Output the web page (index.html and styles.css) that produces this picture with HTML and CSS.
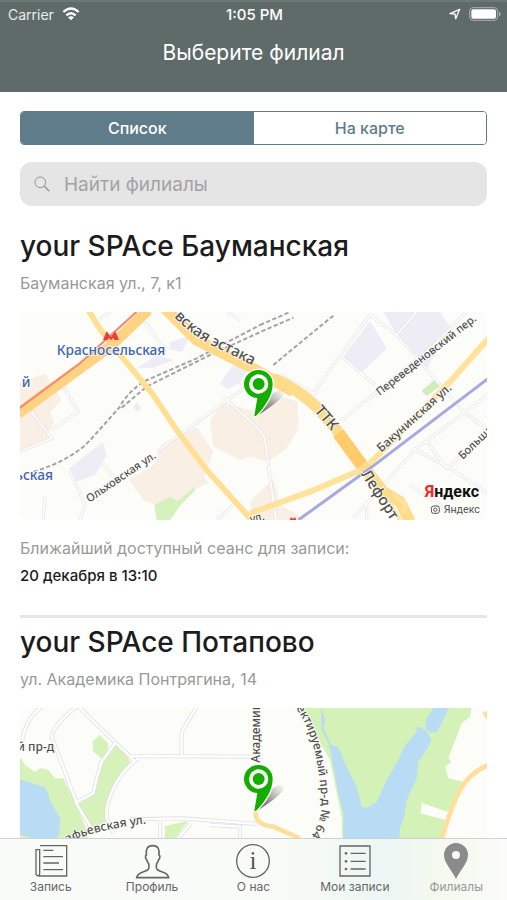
FILE: index.html
```html
<!DOCTYPE html>
<html lang="ru">
<head>
<meta charset="utf-8">
<meta name="viewport" content="width=device-width, initial-scale=1">
<title>Выберите филиал</title>
<link rel="stylesheet" href="styles.css">
</head>
<body>
<svg class="defs" aria-hidden="true">
  <defs>
    <linearGradient id="shade" x1="0" y1="1" x2="1" y2="0">
      <stop offset="0" stop-color="#333" stop-opacity=".9"/>
      <stop offset=".5" stop-color="#555" stop-opacity=".55"/>
      <stop offset="1" stop-color="#888" stop-opacity="0"/>
    </linearGradient>
    <symbol id="pin" viewBox="0 0 160 160" overflow="visible">
      <path d="M46 146 L82 92 Q106 62 130 66 Q138 76 116 96 Q92 118 46 146Z" fill="url(#shade)"/>
      <path d="M55 2a46 46 0 0 1 46 46c0 34-22 70-54 101l-9-4 7-52A46 46 0 0 1 55 2Z" fill="#fff"/>
      <path d="M55 6a42 42 0 0 1 42 42c0 32-20 66-51 97l-4-2 9-53A42 42 0 0 1 55 6Z" fill="#15ad00"/>
      <circle cx="55" cy="48" r="29" fill="#fff"/>
      <circle cx="55" cy="48" r="18" fill="#15ad00"/>
    </symbol>
  </defs>
</svg>
<div class="app">
  <header class="header">
    <div class="status">
      <div class="status-left">
        <span>Carrier</span>
        <svg class="wifi" viewBox="0 0 54 42" aria-hidden="true"><g fill="none" stroke="#fff" stroke-width="7"><path d="M4 15Q27-6 50 15"/><path d="M13 25Q27 12 41 25"/></g><path d="M18 31q9-7 18 0l-9 9Z" fill="#fff"/></svg>
      </div>
      <span class="clock">1:05 PM</span>
      <div class="status-right">
        <svg class="arrow" viewBox="0 0 36 36" aria-hidden="true"><path d="M3 17 32 4 20 32 18 18Z" fill="none" stroke="#fff" stroke-width="4" stroke-linejoin="round"/></svg>
        <svg class="battery" viewBox="0 0 96 42" aria-hidden="true"><rect x="2" y="2" width="84" height="38" rx="10" fill="none" stroke="#a9b1af" stroke-width="3"/><rect x="7" y="7" width="74" height="28" rx="6" fill="#fff"/><path d="M90 14q5 2 5 7t-5 7Z" fill="#a9b1af"/></svg>
      </div>
    </div>
    <h1 class="title">Выберите филиал</h1>
  </header>

  <main class="content">
    <div class="segments">
      <button type="button" class="segment segment-active" aria-pressed="true">Список</button>
      <button type="button" class="segment" aria-pressed="false">На карте</button>
    </div>
    <label class="search">
      <svg class="search-icon" viewBox="0 0 48 48" aria-hidden="true"><circle cx="19" cy="19" r="16" fill="none" stroke="#929292" stroke-width="3"/><path d="M31 31 46 46" stroke="#929292" stroke-width="4"/></svg>
      <input class="search-input" type="text" placeholder="Найти филиалы" aria-label="Найти филиалы">
    </label>

    <article class="branch">
      <h2 class="name">your SPAce Бауманская</h2>
      <p class="address">Бауманская ул., 7, к1</p>
      <svg class="map" viewBox="0 0 1401 624" role="img" aria-label="Карта: Бауманская ул., 7, к1">
        <rect width="1401" height="624" fill="#fcfcf8"/>
        <g transform="translate(-30 -21)">
          <g fill="#faefe5">
            <path d="M30 235 105 205 155 285 120 320 132 350 118 380 126 405 30 445Z"/>
            <path d="M455 420 560 365 610 440 582 515 596 535 545 555 505 590 435 600 400 585 358 525 430 480Z"/>
            <path d="M600 345 640 295 740 320 780 290 820 275 862 290 866 370 830 430 775 470 720 455 690 465 610 425Z"/>
            <path d="M720 590 790 520 810 600 890 645H735Z"/>
          </g>
          <g fill="#eeecf4">
            <path d="M178 490 278 412 290 450 258 508 200 530Z"/>
            <path d="M380 190 440 150 490 165 430 188ZM478 112 540 92 515 140 480 135ZM630 235 670 180 710 195 690 235 652 252ZM370 305 380 290 394 310 380 320Z"/>
          </g>
          <path d="M433 600 480 575 502 588 550 548 558 553 510 602 480 645H440Z" fill="#d6f0be"/>
          <g fill="none" stroke="#e3e3e5" stroke-width="9">
            <path d="M65 320 125 400 30 440M125 375 205 320 160 245M105 575 100 645M178 495 225 600 210 645M280 475 320 530M620 645 680 590M405 50 450 115 475 135M440 440 750 215M640 275 750 375 764 400 790 590 798 645M260 50 300 20M650 20 690 45"/>
          </g>
          <g fill="none" stroke="#fff" stroke-width="5">
            <path d="M65 320 125 400 30 440M125 375 205 320 160 245M105 575 100 645M178 495 225 600 210 645M280 475 320 530M620 645 680 590M405 50 450 115 475 135M440 440 750 215M640 275 750 375 764 400 790 590 798 645M260 50 300 20M650 20 690 45"/>
          </g>
          <g fill="none" stroke="#a5a5a5" stroke-width="6">
            <path d="M70 500Q190 465 250 395L330 305Q350 265 400 230L560 160 750 60" stroke-dasharray="13 7"/>
            <path d="M335 308 410 245 600 150 760 77 850 38" stroke-dasharray="13 7"/>
            <path d="M750 60 840 21M790 180 850 130 970 32" stroke-dasharray="13 7"/>
          </g>
          <path d="M235 15 265 65 310 125 360 185 430 270 500 375 590 495 725 645" fill="none" stroke="#ffdf91" stroke-width="17"/>
          <path d="M25 325 300 125 415 15" fill="none" stroke="#ffd384" stroke-width="32"/>
          <path d="M25 312 210 175 380 20" fill="none" stroke="#f78772" stroke-width="6"/>
          <path d="M465 10 560 105 720 185 850 260" fill="none" stroke="#ffda88" stroke-width="34"/>
        </g>
        <g transform="translate(690 -21)">
          <g fill="#eeecf4">
            <path d="M280 155 360 48 410 130 330 208ZM400 20H570L605 75 530 190 440 90Z"/>
          </g>
          <path d="M515 258 555 223 572 242 530 273Z" fill="#d0edbd"/>
          <g fill="none" stroke="#e3e3e5" stroke-width="9">
            <path d="M190 265 250 180 360 30M275 155 375 240M360 30 440 90 640 320 720 380M440 90 500 20M270 350 375 265 540 130 650 20M310 640 500 430 720 265M490 430 600 490 720 570M530 410 590 490 720 380M90 210 200 270M350 590V645M480 540 600 620"/>
          </g>
          <g fill="none" stroke="#fff" stroke-width="5">
            <path d="M190 265 250 180 360 30M275 155 375 240M360 30 440 90 640 320 720 380M440 90 500 20M270 350 375 265 540 130 650 20M310 640 500 430 720 265M490 430 600 490 720 570M530 410 590 490 720 380M90 210 200 270M350 590V645M480 540 600 620"/>
          </g>
          <path d="M0 625 180 560 345 490 440 395 600 230 720 95" fill="none" stroke="#ffe39c" stroke-width="18"/>
          <path d="M70 220Q140 250 205 310L260 375 345 490 400 560 450 590 480 650" fill="none" stroke="#ffdc8c" stroke-width="34"/>
          <path d="M265 385 335 480" fill="none" stroke="#ffcb6b" stroke-width="38"/>
          <path d="M410 580 450 645M430 570 465 595 460 625" fill="none" stroke="#ffe39c" stroke-width="12"/>
          <path d="M145 645 360 490 715 220" fill="none" stroke="#a6aae0" stroke-width="9"/>
        </g>
        <g class="map-label">
          <path id="road" d="M462 15Q520 75 590 107T790 210" fill="none"/>
          <text class="label-large"><textPath href="#road">вская эстака</textPath></text>
          <text class="label-station" x="110" y="128">Красносельская</text>
          <text class="label-station" x="5" y="226">й</text>
          <text class="label-station" x="-14" y="503">ьская</text>
          <text transform="translate(208 572) rotate(-34)">Ольховская ул.</text>
          <text transform="translate(1079 252) rotate(-38)">Переведеновский пер.</text>
          <text class="label-medium" transform="translate(1084 422) rotate(-42)">Бакунинская ул.</text>
          <text transform="translate(1328 444) rotate(-44)">Больша</text>
          <text class="label-large" transform="translate(882 297) rotate(49)">ТТК</text>
          <text class="label-large" transform="translate(1022 486) rotate(57)">Лефорт</text>
          <text transform="translate(692 633) rotate(-14)">ул.</text>
        </g>
        <path d="M249 84 260 58 273 75 286 58 297 84H283L280 77 273 85 266 77 263 84Z" fill="#ed3c3a"/>
        <path d="M809 624 814 615 819 621 825 615 829 624Z" fill="#ed3c3a"/>
        <text class="brand" x="1214" y="554"><tspan class="brand-first">Я</tspan>ндекс</text>
        <g fill="none" stroke="#555" stroke-width="3"><rect x="1234" y="582" width="24" height="22" rx="7"/><circle cx="1246" cy="593" r="5"/></g>
        <text class="copyright" x="1271" y="603">Яндекс</text>
        <use href="#pin" x="661" y="168" width="160" height="160"/>
      </svg>
      <p class="hint">Ближайший доступный сеанс для записи:</p>
      <p class="slot">20 декабря в 13:10</p>
    </article>

    <article class="branch branch-next">
      <h2 class="name">your SPAce Потапово</h2>
      <p class="address">ул. Академика Понтрягина, 14</p>
      <svg class="map" viewBox="0 0 1401 624" role="img" aria-label="Карта: ул. Академика Понтрягина, 14">
        <rect width="1401" height="624" fill="#fcfcf8"/>
        <g transform="translate(-30 -24)">
          <g fill="#d6f1b9">
            <path d="M30 170 45 195 75 217 90 204 115 210 135 235 160 235 202 320 232 395 245 650H30Z"/>
            <path d="M318 135 345 155 360 185 350 210 310 255 285 325 290 365 235 385 202 315 250 280 270 195Z"/>
            <path d="M247 125 268 105 295 130 292 155 275 175 250 155Z"/>
            <path d="M465 378 535 362 495 415 480 650H460Z"/>
          </g>
          <path d="M30 238 105 262 125 310 150 355 148 400 130 430 30 405Z" fill="#b7dcf4"/>
          <g fill="none" stroke="#e0e1e3" stroke-width="12">
            <path d="M95 20Q45 60 37 120M200 20Q130 75 125 110L202 315 250 395M202 305 250 280Q260 230 275 185L315 130M205 20 355 165 375 185M560 20 515 95V165M360 168 760 170M385 175Q310 230 290 325V355L310 400M360 358 520 355 740 372M450 360V420M540 372 500 420M600 375 690 380V420"/>
          </g>
          <g fill="none" stroke="#fff" stroke-width="7">
            <path d="M95 20Q45 60 37 120M200 20Q130 75 125 110L202 315 250 395M202 305 250 280Q260 230 275 185L315 130M205 20 355 165 375 185M560 20 515 95V165M360 168 760 170M385 175Q310 230 290 325V355L310 400M360 358 520 355 740 372M450 360V420M540 372 500 420M600 375 690 380V420"/>
          </g>
        </g>
        <g transform="translate(690 -24)">
          <path d="M150 20H665L660 50 635 70 595 175 605 185 585 200 595 235 640 245 610 315 590 335 515 308 512 340 585 360 575 425V650H280L275 350 240 180Z" fill="#d4f1b7"/>
          <path d="M213 20 225 60 220 85 232 110 243 135 265 140 285 190 320 260 335 320 350 325 380 305 405 250 445 180 460 145 500 95 500 80 527 90 545 120 525 155 505 185 500 235 470 300 462 355 450 380 430 650H280L280 340 265 280 243 160 235 130 215 90Z" fill="#b7dcf4"/>
          <path d="M552 20H598L575 70 560 97 540 98 525 85 528 60Z" fill="#b7dcf4"/>
          <path d="M18 330Q10 375 70 380L150 415M575 420Q590 360 620 290Q650 220 720 193M703 35 715 55" fill="none" stroke="#ffdf9b" stroke-width="14"/>
        </g>
        <g class="map-label">
          <path id="drive" d="M828 0Q872 64 888 150T905 296Q902 352 864 396L850 412" fill="none"/>
          <path id="lane" d="M126 413Q210 365 400 344" fill="none"/>
          <text class="label-medium"><textPath href="#drive">ектируемый пр-д № 641,</textPath></text>
          <text class="label-medium"><textPath href="#lane">тафьевская ул.</textPath></text>
          <text class="label-medium" x="-8" y="128">й пр-д</text>
          <text class="label-medium" transform="translate(721 164) rotate(-90)">Академика</text>
        </g>
        <use href="#pin" x="661" y="165" width="160" height="160"/>
      </svg>
    </article>
  </main>

  <nav class="tabs">
    <a class="tab" href="#booking">
      <svg class="tab-icon" viewBox="0 0 108 108" aria-hidden="true"><g fill="none" stroke="#666" stroke-width="4"><path d="M21 8H101V99H17Q9 99 9 91V20H20V90Q20 99 14 98"/><path d="M31 22H61M31 41H90M31 60H78M31 80H90"/></g></svg>
      <span>Запись</span>
    </a>
    <a class="tab" href="#profile">
      <svg class="tab-icon" viewBox="0 0 108 108" aria-hidden="true"><path d="M56 8C40 8 35 18 37 36C32 38 35 48 38 50Q40 57 44 62C46 69 46 74 43 79C34 88 10 86 8 104H104C102 86 78 88 69 79C66 74 66 69 68 62Q72 57 74 50C77 48 80 38 75 36C77 18 72 8 56 8Z" fill="none" stroke="#666" stroke-width="5"/></svg>
      <span>Профиль</span>
    </a>
    <a class="tab" href="#about">
      <svg class="tab-icon" viewBox="0 0 108 108" aria-hidden="true"><circle cx="54" cy="54" r="49" fill="none" stroke="#666" stroke-width="4"/><text class="tab-glyph" x="54" y="78" text-anchor="middle">i</text></svg>
      <span>О нас</span>
    </a>
    <a class="tab" href="#records">
      <svg class="tab-icon" viewBox="0 0 108 108" aria-hidden="true"><g fill="none" stroke="#666" stroke-width="4"><path d="M9 9H99V99H9Z"/><path d="M41 31H86M41 55H86M41 78H86"/></g><g fill="#666"><circle cx="27" cy="31" r="4"/><circle cx="27" cy="55" r="4"/><circle cx="27" cy="78" r="4"/></g></svg>
      <span>Мои записи</span>
    </a>
    <a class="tab tab-current" href="#branches" aria-current="page">
      <svg class="tab-icon" viewBox="0 0 108 108" aria-hidden="true"><path fill-rule="evenodd" d="M54 0A36 36 0 0 1 90 36C90 60 66 82 54 108C42 82 18 60 18 36A36 36 0 0 1 54 0ZM54 24A12 12 0 1 0 54 48A12 12 0 1 0 54 24Z" fill="#8b8b8b"/></svg>
      <span>Филиалы</span>
    </a>
  </nav>
</div>
</body>
</html>
```
FILE: styles.css
```css
* {
  box-sizing: border-box;
}

body {
  margin: 0;
  background: #fff;
  color: #1c1c1c;
  font-family: Inter, "Liberation Sans", sans-serif;
}

h1, h2, p {
  margin: 0;
  font-weight: 400;
}

.defs {
  position: absolute;
  width: 0;
  height: 0;
}

.app {
  display: flex;
  flex-direction: column;
  height: 100vh;
}

.header {
  flex: none;
  padding-bottom: 25px;
  border-top: 2px solid #6b7876;
  background: #5f6b69;
  color: #fff;
}

.status {
  display: grid;
  grid-template-columns: 1fr auto 1fr;
  align-items: center;
  height: 24px;
  padding: 0 6px 0 8px;
  font-size: 14px;
}

.status-left,
.status-right {
  display: flex;
  align-items: center;
  gap: 8px;
}

.status-left {
  color: #e8ebea;
}

.status-right {
  justify-content: flex-end;
}

.clock {
  font-size: 15px;
  font-weight: 500;
}

.wifi {
  width: 18px;
  height: 14px;
}

.arrow {
  width: 12px;
  height: 12px;
}

.battery {
  width: 32px;
  height: 14px;
}

.title {
  padding-top: 13px;
  font-size: 21px;
  line-height: 28px;
  text-align: center;
}

.content {
  flex: 1;
  min-height: 0;
  padding: 19px 20px 0;
  overflow-y: auto;
  scrollbar-width: none;
}

.segments {
  display: flex;
  height: 34px;
  overflow: hidden;
  border: 1px solid #5f7c8b;
  border-radius: 4px;
}

.segment {
  flex: 1;
  padding: 0;
  border: 0;
  background: #fff;
  color: #5f7c8b;
  font: 500 16px Inter, "Liberation Sans", sans-serif;
}

.segment-active {
  background: #5f7c8b;
  color: #fff;
}

.search {
  display: flex;
  align-items: center;
  gap: 14px;
  height: 44px;
  margin-top: 17px;
  padding: 0 14px;
  border-radius: 12px;
  background: #e5e5e5;
}

.search-icon {
  flex: none;
  width: 16px;
  height: 16px;
}

.search-input {
  flex: 1;
  min-width: 0;
  padding: 0;
  border: 0;
  outline: 0;
  background: transparent;
  color: #1c1c1c;
  font: 400 19px Inter, "Liberation Sans", sans-serif;
}

.search-input::placeholder {
  color: #a3a3a3;
  opacity: 1;
}

.branch {
  padding: 24px 0 29px;
}

.branch-next {
  padding-top: 8px;
  border-top: 3px solid #e6e6e6;
}

.name {
  font-size: 28px;
  font-weight: 500;
  line-height: 32px;
}

.address {
  margin-top: 11px;
  color: #999;
  font-size: 16px;
  line-height: 20px;
}

.map {
  display: block;
  width: 100%;
  height: auto;
  margin-top: 19px;
  border-radius: 6px;
}

.hint {
  margin-top: 18px;
  color: #999;
  font-size: 16px;
  line-height: 20px;
}

.slot {
  margin-top: 8px;
  font-size: 15px;
  font-weight: 500;
  line-height: 20px;
}

.map-label {
  fill: #505050;
  stroke: #fcfcf8;
  stroke-width: 5px;
  paint-order: stroke;
  font-family: "Noto Sans", sans-serif;
  font-size: 33px;
  font-weight: 500;
}

.map-label path {
  stroke: none;
}

.label-medium {
  font-size: 36px;
}

.label-large {
  font-size: 45px;
}

.label-station {
  fill: #4165ae;
  font-size: 41px;
}

.brand {
  fill: #111;
  font-family: Roboto, sans-serif;
  font-size: 48px;
  font-weight: 700;
}

.brand-first {
  fill: #f22;
}

.copyright {
  fill: #555;
  font-family: Roboto, sans-serif;
  font-size: 32px;
}

.tabs {
  flex: none;
  display: grid;
  grid-template-columns: repeat(5, 1fr);
  height: 62px;
  padding-top: 4px;
  border-top: 1px solid #cfd0cf;
  background: linear-gradient(90deg, #f9fbf9 0 50%, #f5faf4 62%, #edf6f4 76%, #f5f9ef 88%, #fbfbf9);
}

.tab {
  display: flex;
  flex-direction: column;
  align-items: center;
  color: #666;
  font-size: 12px;
  line-height: 16px;
  text-decoration: none;
}

.tab-current {
  color: #999;
}

.tab-icon {
  width: 36px;
  height: 36px;
}

.tab-glyph {
  fill: #555;
  font-family: "Liberation Serif", serif;
  font-size: 76px;
}
```
